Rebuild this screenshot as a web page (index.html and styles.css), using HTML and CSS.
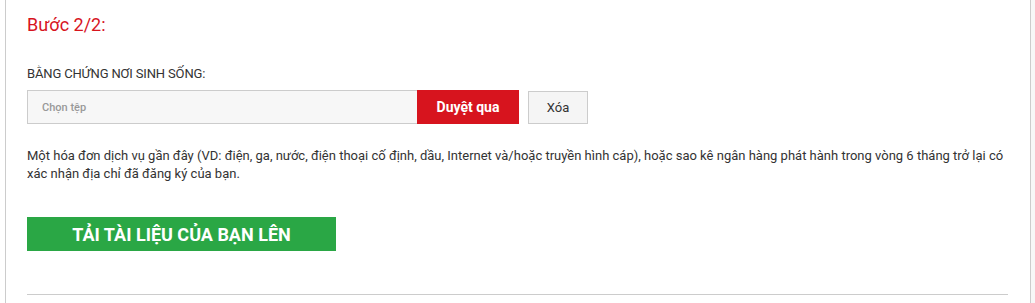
FILE: index.html
```html
<!DOCTYPE html>
<html lang="vi">
<head>
  <meta charset="UTF-8">
  <title>Bước 2/2</title>
  <link rel="stylesheet" href="styles.css">
</head>
<body>
  <div class="page">
    <div class="panel">
      <h2 class="step-title">Bước 2/2:</h2>

      <div class="field">
        <label class="field-label" for="proofFile">Bằng chứng nơi sinh sống:</label>
        <div class="file-row">
          <input type="text" id="proofFile" class="file-name" placeholder="Chọn tệp" readonly>
          <button class="btn-browse">Duyệt qua</button>
          <button class="btn-clear">Xóa</button>
        </div>
      </div>

      <p class="hint">Một hóa đơn dịch vụ gần đây (VD: điện, ga, nước, điện thoại cố định, dầu, Internet và/hoặc truyền hình cáp), hoặc sao kê ngân hàng phát hành trong vòng 6 tháng trở lại có xác nhận địa chỉ đã đăng ký của bạn.</p>

      <button class="btn-upload">Tải tài liệu của bạn lên</button>

      <hr class="divider">
    </div>
  </div>
</body>
</html>
```

FILE: styles.css
```css
html, body {
  margin: 0;
  padding: 0;
  height: 100%;
}

body {
  font-family: Roboto, "Liberation Sans", Arial, sans-serif;
  background-color: #f7f7f7;
  color: #333;
  overflow: hidden;
}

.page {
  width: 1026px;
  height: 100%;
  padding-left: 5px;
  background-color: #fff;
}

.panel {
  height: 100%;
  box-sizing: border-box;
  border-left: 1px solid #ccc;
  border-right: 1px solid #ccc;
  padding: 14px 21px 0 21px;
}

.step-title {
  margin: 0;
  font-size: 18px;
  font-weight: 400;
  color: #d7141e;
  line-height: 22px;
}

.field {
  margin-top: 29px;
}

.field-label {
  display: block;
  font-size: 13px;
  text-transform: uppercase;
  color: #333;
  letter-spacing: -0.15px;
  line-height: 17px;
  margin-bottom: 8px;
}

.file-row {
  display: flex;
  align-items: center;
}

.file-name {
  width: 390px;
  height: 34px;
  box-sizing: border-box;
  padding: 0 14px;
  border: 1px solid #ccc;
  border-right: none;
  background-color: #f7f7f7;
  font-family: inherit;
  font-size: 11px;
  font-weight: 500;
  outline: none;
}

.file-name::placeholder {
  color: #999;
}

.btn-browse {
  width: 102px;
  height: 34px;
  border: none;
  background-color: #d7141e;
  color: #fff;
  font-family: inherit;
  font-size: 14px;
  font-weight: 700;
  cursor: pointer;
}

.btn-clear {
  width: 60px;
  height: 33px;
  margin-left: 9px;
  border: 1px solid #ccc;
  background-color: #f5f5f5;
  color: #333;
  font-family: inherit;
  font-size: 13px;
  cursor: pointer;
}

.hint {
  margin: 23px 0 0;
  font-size: 13px;
  line-height: 18px;
  color: #333;
}

.btn-upload {
  display: block;
  margin-top: 34px;
  width: 309px;
  height: 34px;
  border: none;
  background-color: #2aa745;
  color: #fff;
  font-family: inherit;
  font-size: 18px;
  font-weight: 700;
  text-transform: uppercase;
  cursor: pointer;
}

.divider {
  margin: 43px 0 0;
  width: 981px;
  border: none;
  border-top: 1px solid #ccc;
}
```
